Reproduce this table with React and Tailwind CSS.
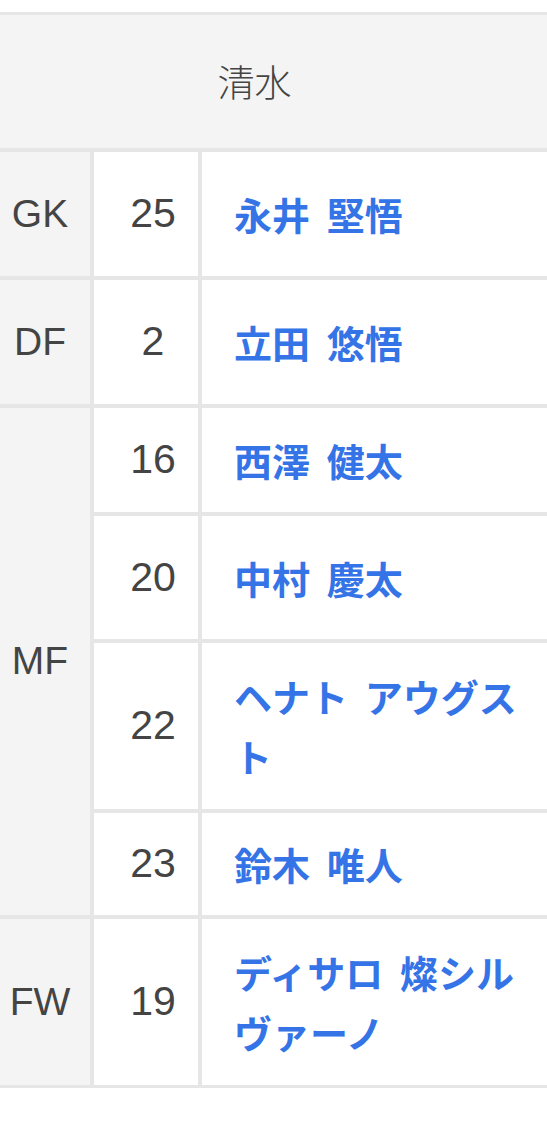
import React from 'react';

const players = [
  { pos: 'GK', no: '25', name: '永井 堅悟' },
  { pos: 'DF', no: '2', name: '立田 悠悟' },
  { pos: 'MF', no: '16', name: '西澤 健太', span: 4 },
  { no: '20', name: '中村 慶太' },
  { no: '22', name: 'ヘナト アウグスト' },
  { no: '23', name: '鈴木 唯人' },
  { pos: 'FW', no: '19', name: 'ディサロ 燦シルヴァーノ' },
];

const rowSpan = {
  1: 'row-span-1',
  4: 'row-span-4',
};

const App = () => {
  return (
    <div
      className="w-[547px] min-h-[1123px] bg-white pt-3"
      style={{ fontFamily: '"Liberation Sans", "Noto Sans CJK JP", sans-serif' }}
    >
      <div className="grid grid-cols-[90px_104px_1fr] grid-rows-[133px_124px_124px_104px_123px_166px_102px_166px] gap-[4px] bg-[#e6e6e6] border-t-[3px] border-b-[3px] border-[#e6e6e6]">
        <div
          className="col-span-3 flex items-center justify-center bg-[#f4f4f4] pr-[38px] text-[37px] font-light text-[#444]"
          style={{ fontFamily: '"Noto Sans CJK JP", sans-serif' }}
        >
          清水
        </div>

        {players.map((p, i) => (
          <React.Fragment key={i}>
            {p.pos && (
              <div
                className={`${rowSpan[p.span || 1]} flex items-center justify-center bg-[#f4f4f4] pr-[10px] text-[39px] text-[#444]`}
              >
                {p.pos}
              </div>
            )}
            <div className="flex items-center justify-center bg-white pl-[14px] text-[41px] text-[#444]">
              {p.no}
            </div>
            <div className="flex items-center bg-white pl-[32px] pr-[26px]">
              <span
                className="text-[38px] font-bold leading-[60px] text-[#3574e6] [word-spacing:8px]"
                style={{ fontFamily: '"Noto Sans CJK JP", sans-serif' }}
              >
                {p.name}
              </span>
            </div>
          </React.Fragment>
        ))}
      </div>
    </div>
  );
};

export default App;
